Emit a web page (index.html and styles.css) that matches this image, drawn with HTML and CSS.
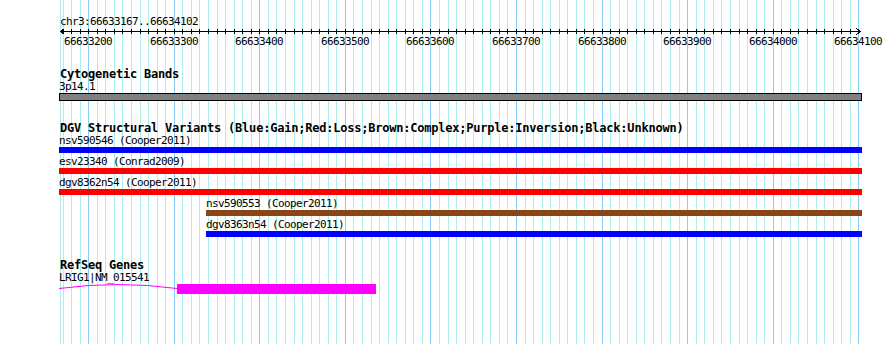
FILE: index.html
```html
<!DOCTYPE html>
<html lang="en">
<head>
  <meta charset="UTF-8" />
  <meta name="viewport" content="width=device-width, initial-scale=1.0"/>
  <title>chr3:66633167..66634102</title>
  <link rel="stylesheet" href="styles.css">
</head>
<body>
  <div class="browser">
    <!-- grid lines sit behind every track -->
    <svg class="grid" id="grid" width="890" height="344"></svg>

    <div class="ruler">
      <div class="ruler-label">chr3:66633167..66634102</div>
      <svg class="axis" id="axis" width="890" height="20"></svg>
    </div>

    <section class="track" id="cytoband">
      <h2 class="track-title">Cytogenetic Bands</h2>
    </section>

    <section class="track" id="dgv">
      <h2 class="track-title">DGV Structural Variants (Blue:Gain;Red:Loss;Brown:Complex;Purple:Inversion;Black:Unknown)</h2>
    </section>

    <section class="track" id="refseq">
      <h2 class="track-title">RefSeq Genes</h2>
    </section>
  </div>

  <script>
    const view = { start: 66633167, end: 66634102, left: 60, width: 800 };
    const clipLeft = 59;
    const clipRight = 862;
    const svgNS = "http://www.w3.org/2000/svg";

    function toX(bp) {
      return Math.round(view.left + (bp - view.start) * view.width / (view.end - view.start));
    }

    function clip(x) {
      return Math.max(clipLeft, Math.min(clipRight, x));
    }

    function svgEl(parent, tag, attrs) {
      const el = document.createElementNS(svgNS, tag);
      for (const key in attrs) el.setAttribute(key, attrs[key]);
      parent.appendChild(el);
      return el;
    }

    // Grid
    const grid = document.getElementById("grid");
    svgEl(grid, "line", { x1: 60.5, y1: 0, x2: 60.5, y2: 344, class: "minor" });
    for (let bp = Math.ceil(view.start / 10) * 10; bp <= view.end; bp += 10) {
      const x = toX(bp) + 0.5;
      svgEl(grid, "line", { x1: x, y1: 0, x2: x, y2: 344, class: bp % 100 === 0 ? "major" : "minor" });
    }

    // Ruler
    const axis = document.getElementById("axis");
    svgEl(axis, "line", { x1: 60, y1: 3.5, x2: 861, y2: 3.5 });
    svgEl(axis, "polyline", { points: "64.5,0.5 60.5,3.5 64.5,6.5" });
    svgEl(axis, "polyline", { points: "856.5,0.5 860.5,3.5 856.5,6.5" });
    for (let bp = Math.ceil(view.start / 10) * 10; bp <= view.end; bp += 10) {
      const x = toX(bp) + 0.5;
      svgEl(axis, "line", { x1: x, y1: 1, x2: x, y2: 6 });
      if (bp % 100 === 0) {
        const label = svgEl(axis, "text", { x: toX(bp), y: 17, "text-anchor": "middle" });
        label.textContent = bp;
      }
    }

    const tracks = {
      cytoband: [
        { name: "3p14.1", start: 63700001, end: 69800000, type: "band" }
      ],
      dgv: [
        { name: "nsv590546 (Cooper2011)", start: 66612036, end: 66712690, type: "gain" },
        { name: "esv23340 (Conrad2009)", start: 66618412, end: 66652205, type: "loss" },
        { name: "dgv8362n54 (Cooper2011)", start: 66600254, end: 66660019, type: "loss" },
        { name: "nsv590553 (Cooper2011)", start: 66633338, end: 66761802, type: "complex" },
        { name: "dgv8363n54 (Cooper2011)", start: 66633338, end: 66665120, type: "gain" }
      ],
      refseq: [
        { name: "LRIG1|NM_015541", start: 66429222, end: 66633536, exonStart: 66633304, type: "gene" }
      ]
    };

    function renderFeature(feature) {
      const x0 = clip(toX(feature.start));
      const x1 = clip(toX(feature.end));
      const row = document.createElement("div");
      row.className = "feature " + feature.type;
      row.style.marginLeft = x0 + "px";
      row.style.width = (x1 - x0) + "px";

      const label = document.createElement("div");
      label.className = "feature-label";
      label.textContent = feature.name;
      row.appendChild(label);

      if (feature.type === "gene") {
        const w = x1 - x0;
        const ex = toX(feature.exonStart) - x0;
        const glyph = document.createElementNS(svgNS, "svg");
        glyph.setAttribute("class", "gene-glyph");
        glyph.setAttribute("width", w);
        glyph.setAttribute("height", 10);
        svgEl(glyph, "path", { d: `M0,4.5 Q${ex / 2},-3.5 ${ex},4.5`, class: "intron" });
        svgEl(glyph, "rect", { x: ex, y: 0, width: w - ex, height: 10, class: "exon" });
        row.appendChild(glyph);
      } else {
        const bar = document.createElement("div");
        bar.className = "bar";
        row.appendChild(bar);
      }
      return row;
    }

    for (const id in tracks) {
      const section = document.getElementById(id);
      tracks[id].forEach(f => section.appendChild(renderFeature(f)));
    }
  </script>
</body>
</html>
```

FILE: styles.css
```css
body {
  margin: 0;
  background: #fff;
}

.browser {
  position: relative;
  z-index: 0;
  width: 890px;
  height: 344px;
  box-sizing: border-box;
  padding-top: 15px;
  overflow: hidden;
  background: #fff;
  color: #000;
  font-family: "DejaVu Sans Mono", "Liberation Mono", monospace;
  font-size: 11px;
  letter-spacing: -0.62px;
  line-height: 13px;
}

.grid {
  position: absolute;
  top: 0;
  left: 0;
  z-index: -1;
}

.grid .minor {
  stroke: #afeeee;
  stroke-width: 1;
}

.grid .major {
  stroke: #87cefa;
  stroke-width: 1;
}

.ruler-label {
  margin-left: 60px;
}

.axis {
  display: block;
  overflow: visible;
}

.axis line,
.axis polyline {
  stroke: #000;
  stroke-width: 1;
  fill: none;
  shape-rendering: crispEdges;
}

.axis text {
  font-family: "DejaVu Sans Mono", "Liberation Mono", monospace;
  font-size: 11px;
  letter-spacing: -0.62px;
  fill: #000;
}

.track {
  padding-top: 20px;
}

.track-title {
  margin: 0 0 0 60px;
  font-size: 12px;
  letter-spacing: -0.22px;
  font-weight: bold;
  line-height: 12px;
  white-space: nowrap;
}

.feature {
  margin-bottom: 2px;
}

.feature-label {
  white-space: nowrap;
}

.bar {
  height: 6px;
}

.band {
  margin-bottom: 1px;
}

.band .bar {
  height: 8px;
  box-sizing: border-box;
  border: 1px solid #000;
  background: #808080;
}

.gain .bar {
  background: #0000ff;
}

.loss .bar {
  background: #ff0000;
}

.complex .bar {
  background: #8b4513;
}

/* Gene: hat-shaped intron and a filled exon */
.gene-glyph {
  display: block;
  overflow: visible;
}

.gene-glyph .intron {
  fill: none;
  stroke: #ff00ff;
  stroke-width: 1;
}

.gene-glyph .exon {
  fill: #ff00ff;
}
```
